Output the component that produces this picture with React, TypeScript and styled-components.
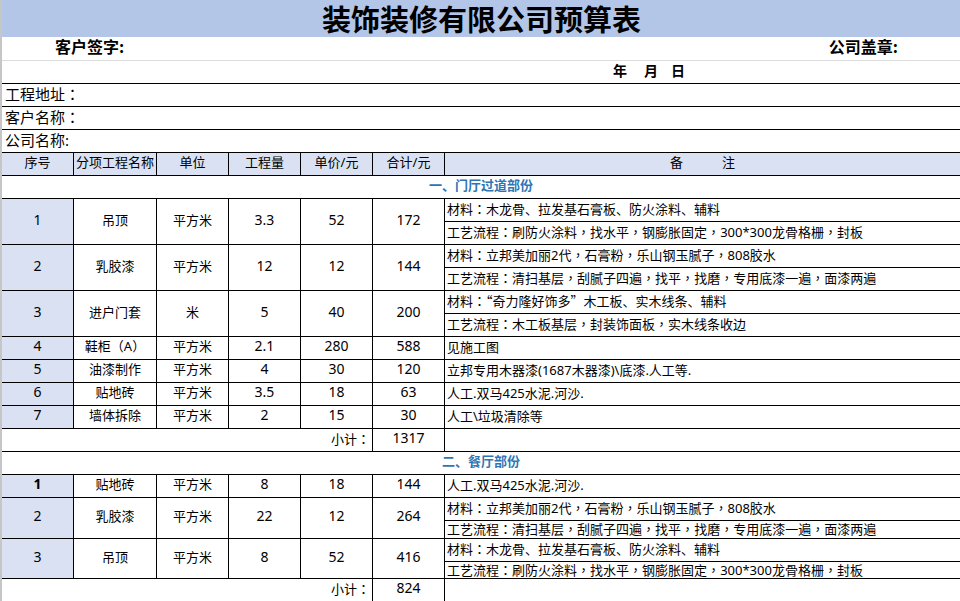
import React from "react";
import styled, { createGlobalStyle } from "styled-components";

const Global = createGlobalStyle`
  html, body {
    margin: 0;
    padding: 0;
    height: 601px;
    overflow: hidden;
    background: #fff;
  }
`;

const FONT = `"Noto Sans", "Noto Sans CJK SC", sans-serif`;
const CJK = `"Noto Sans CJK SC", sans-serif`;

const Sheet = styled.div`
  width: 960px;
  height: 601px;
  box-sizing: border-box;
  border-left: 2px solid #c6c6c6;
  overflow: hidden;
  color: #000;
  font-family: ${FONT};
`;

const Title = styled.div`
  height: 37px;
  padding-left: 1px;
  background: #b4c6e7;
  text-align: center;
  font: 700 29px/37px ${CJK};
`;

const SignRow = styled.div`
  height: 24px;
  box-sizing: border-box;
  border-bottom: 1px solid #dcdcdc;
  display: flex;
  justify-content: space-between;
  padding: 0 62px 0 53px;
  font: 700 16px/18px ${CJK};
`;

const DateRow = styled.div`
  height: 23px;
  box-sizing: border-box;
  border-bottom: 1px solid #000;
  display: flex;
  padding-left: 611px;
  font: 700 14px/18px ${CJK};
`;

const DatePart = styled.span<{ $gap: number }>`
  margin-right: ${({ $gap }) => $gap}px;
`;

const InfoRow = styled.div`
  height: 23px;
  box-sizing: border-box;
  border-bottom: 1px solid #000;
  padding-left: 3px;
  font: 400 15px/20px ${FONT};
`;

// the spreadsheet's colons, commas and quotes sit centred in their square
const Punct = styled.span`
  font-family: "Noto Sans CJK TC", sans-serif;
`;

const Marked = ({ text }: { text: string }) => (
  <>
    {text.split(/([：，“”])/).map((part, i) =>
      i % 2 ? <Punct key={i}>{part}</Punct> : part
    )}
  </>
);

const Table = styled.table`
  width: 958px;
  table-layout: fixed;
  border-collapse: separate;
  border-spacing: 0;
  font: 400 13px/12px ${FONT};
`;

const Row = styled.tr<{ $h?: number }>`
  height: ${({ $h }) => $h ?? 23}px;
`;

const Cell = styled.td<{ $fill?: boolean; $bold?: boolean }>`
  box-sizing: border-box;
  padding: 0 0 4px;
  text-align: center;
  border-right: 1px solid #000;
  border-bottom: 1px solid #000;
  background: ${({ $fill }) => ($fill ? "#d9e1f2" : "transparent")};
  font-weight: ${({ $bold }) => ($bold ? 700 : 400)};
  white-space: nowrap;
  &:last-child {
    border-right: none;
  }
`;

const NumCell = styled(Cell)`
  font-size: 14px;
`;

const HeadCell = styled(Cell)`
  background: #d9e1f2;
`;

const NoteCell = styled(Cell)<{ $short?: boolean }>`
  text-align: left;
  padding-left: 2px;
  padding-bottom: ${({ $short }) => ($short ? 1 : 3)}px;
`;

const SectionCell = styled(Cell)`
  color: #2e75b6;
  font-weight: 700;
`;

const SumCell = styled(Cell)`
  text-align: right;
  padding-right: 2px;
  padding-bottom: 3px;
`;

type Item = {
  no: string;
  name: string;
  unit: string;
  qty: string;
  price: string;
  total: string;
  notes: string[];
  heights?: number[];
  boldNo?: boolean;
};

const WOOD = "材料：木龙骨、拉发基石膏板、防火涂料、辅料";
const WOOD_FLOW = "工艺流程：刷防火涂料，找水平，钢膨胀固定，300*300龙骨格栅，封板";
const LATEX = "材料：立邦美加丽2代，石膏粉，乐山钢玉腻子，808胶水";
const LATEX_FLOW = "工艺流程：清扫基层，刮腻子四遍，找平，找磨，专用底漆一遍，面漆两遍";
const TILE = "人工.双马425水泥.河沙.";

const part1: Item[] = [
  { no: "1", name: "吊顶", unit: "平方米", qty: "3.3", price: "52", total: "172", notes: [WOOD, WOOD_FLOW] },
  { no: "2", name: "乳胶漆", unit: "平方米", qty: "12", price: "12", total: "144", notes: [LATEX, LATEX_FLOW] },
  { no: "3", name: "进户门套", unit: "米", qty: "5", price: "40", total: "200", notes: ["材料：“奇力隆好饰多”木工板、实木线条、辅料", "工艺流程：木工板基层，封装饰面板，实木线条收边"] },
  { no: "4", name: "鞋柜（A）", unit: "平方米", qty: "2.1", price: "280", total: "588", notes: ["见施工图"] },
  { no: "5", name: "油漆制作", unit: "平方米", qty: "4", price: "30", total: "120", notes: ["立邦专用木器漆(1687木器漆)\\底漆.人工等."] },
  { no: "6", name: "贴地砖", unit: "平方米", qty: "3.5", price: "18", total: "63", notes: [TILE] },
  { no: "7", name: "墙体拆除", unit: "平方米", qty: "2", price: "15", total: "30", notes: ["人工\\垃圾清除等"] },
];

const part2: Item[] = [
  { no: "1", name: "贴地砖", unit: "平方米", qty: "8", price: "18", total: "144", notes: [TILE], boldNo: true },
  { no: "2", name: "乳胶漆", unit: "平方米", qty: "22", price: "12", total: "264", notes: [LATEX, LATEX_FLOW], heights: [23, 18] },
  { no: "3", name: "吊顶", unit: "平方米", qty: "8", price: "52", total: "416", notes: [WOOD, WOOD_FLOW], heights: [23, 17] },
];

const ItemRows = ({ item }: { item: Item }) => {
  const span = item.notes.length;
  return (
    <>
      <Row $h={item.heights?.[0]}>
        <NumCell $fill $bold={item.boldNo} rowSpan={span}>{item.no}</NumCell>
        <Cell rowSpan={span}>{item.name}</Cell>
        <Cell rowSpan={span}>{item.unit}</Cell>
        <NumCell rowSpan={span}>{item.qty}</NumCell>
        <NumCell rowSpan={span}>{item.price}</NumCell>
        <NumCell rowSpan={span}>{item.total}</NumCell>
        <NoteCell><Marked text={item.notes[0]} /></NoteCell>
      </Row>
      {item.notes[1] && (
        <Row $h={item.heights?.[1]}>
          <NoteCell $short={!!item.heights}><Marked text={item.notes[1]} /></NoteCell>
        </Row>
      )}
    </>
  );
};

const Subtotal = ({ value }: { value: string }) => (
  <Row>
    <SumCell colSpan={5}><Marked text="小计：" /></SumCell>
    <NumCell>{value}</NumCell>
    <Cell />
  </Row>
);

export default function App() {
  return (
    <Sheet>
      <Global />
      <Title>装饰装修有限公司预算表</Title>
      <SignRow>
        <span>客户签字:</span>
        <span>公司盖章:</span>
      </SignRow>
      <DateRow>
        <DatePart $gap={17}>年</DatePart>
        <DatePart $gap={13}>月</DatePart>
        <DatePart $gap={0}>日</DatePart>
      </DateRow>
      <InfoRow><Marked text="工程地址：" /></InfoRow>
      <InfoRow><Marked text="客户名称：" /></InfoRow>
      <InfoRow>公司名称:</InfoRow>
      <Table>
        <colgroup>
          <col style={{ width: 72 }} />
          <col style={{ width: 83 }} />
          <col style={{ width: 72 }} />
          <col style={{ width: 72 }} />
          <col style={{ width: 72 }} />
          <col style={{ width: 72 }} />
          <col />
        </colgroup>
        <tbody>
          <Row>
            <HeadCell>序号</HeadCell>
            <HeadCell>分项工程名称</HeadCell>
            <HeadCell>单位</HeadCell>
            <HeadCell>工程量</HeadCell>
            <HeadCell>单价/元</HeadCell>
            <HeadCell>合计/元</HeadCell>
            <HeadCell>备&emsp;&emsp;&emsp;注</HeadCell>
          </Row>
          <Row>
            <SectionCell colSpan={7}>一、门厅过道部份</SectionCell>
          </Row>
          {part1.map((item) => (
            <ItemRows key={item.no} item={item} />
          ))}
          <Subtotal value="1317" />
          <Row>
            <SectionCell colSpan={7}>二、餐厅部份</SectionCell>
          </Row>
          {part2.map((item) => (
            <ItemRows key={item.no} item={item} />
          ))}
          <Subtotal value="824" />
        </tbody>
      </Table>
    </Sheet>
  );
}
